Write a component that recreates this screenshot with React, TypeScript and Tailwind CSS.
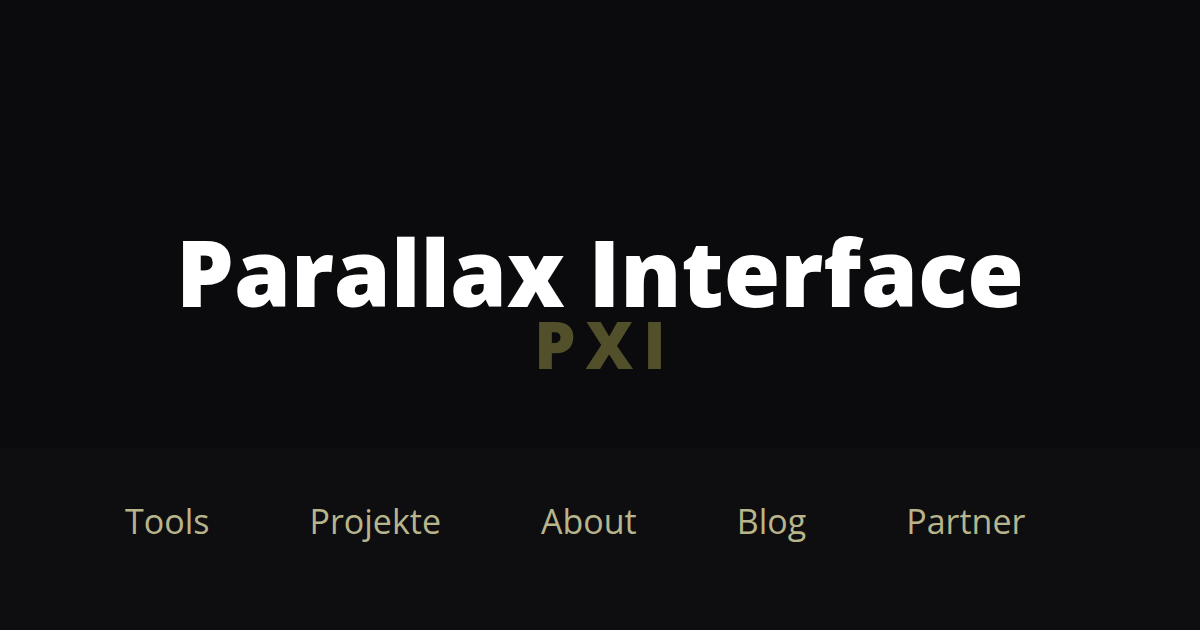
const navItems = ['Tools', 'Projekte', 'About', 'Blog', 'Partner'];

export default function App() {
  return (
    <div
      className="w-[1200px] h-[630px] bg-[#0b0b0e] flex flex-col overflow-hidden"
      style={{ fontFamily: '"Open Sans", "Liberation Sans", sans-serif' }}
    >
      {/* hero */}
      <div className="h-[448px] flex flex-col items-center pt-[226px]">
        <h1 className="text-[91.5px] leading-[91px] font-extrabold text-white">Parallax Interface</h1>
        <div className="text-[66px] leading-[46px] font-extrabold tracking-[0.15em] pl-[0.15em] text-[#524f2b] mt-[3px]">
          PXI
        </div>
      </div>

      {/* nav */}
      <nav className="flex-1 bg-[#0e0e11] flex items-start pt-[50px] pl-[125px] gap-[100px]">
        {navItems.map((item) => (
          <a key={item} href="#" className="text-[34px] leading-[46px] font-medium text-[#b8b58c]">
            {item}
          </a>
        ))}
      </nav>
    </div>
  );
}
